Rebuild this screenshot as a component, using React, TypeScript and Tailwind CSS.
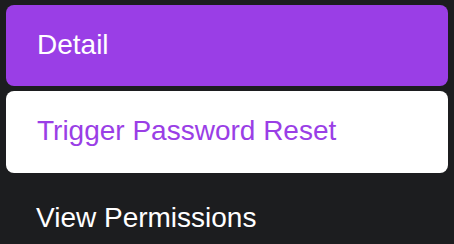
import { useState } from "react";

const items = ["Detail", "Trigger Password Reset", "View Permissions"];

export default function App() {
  const [active] = useState(0);
  const [hovered] = useState(1);

  return (
    <div
      className="h-screen overflow-hidden bg-[#1c1d1f] px-[6px] pt-[5px]"
      style={{ fontFamily: '"Liberation Sans", Arial, sans-serif' }}
    >
      <div className="flex flex-col gap-[5px]">
        {items.map((label, i) => (
          <div
            key={label}
            className={
              i === active
                ? "flex h-[81px] items-center rounded-[8px] bg-[#9a3ee6] pb-[2px] pl-[31px] text-[28px] text-white"
                : i === hovered
                ? "flex h-[82px] items-center rounded-[8px] bg-white pb-[2px] pl-[31px] text-[28px] text-[#9a3ee6]"
                : "flex h-[81px] items-center rounded-[8px] pb-[2px] pl-[30px] text-[28px] text-white"
            }
          >
            {label}
          </div>
        ))}
      </div>
    </div>
  );
}
